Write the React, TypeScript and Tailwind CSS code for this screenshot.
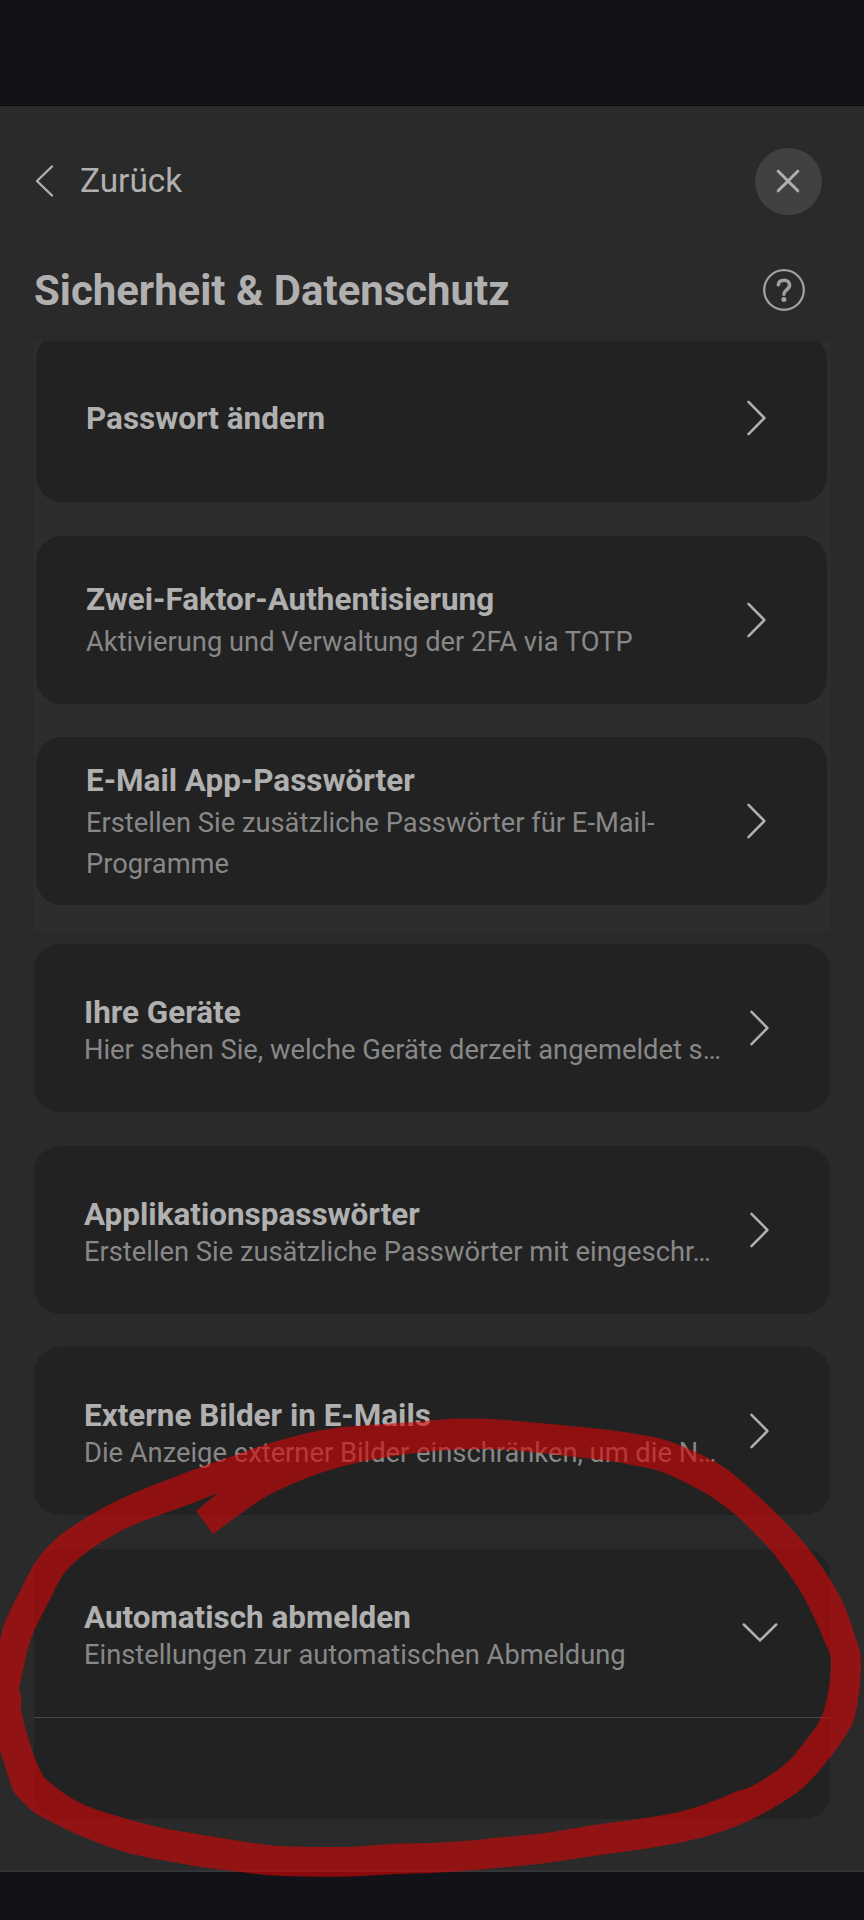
type Item = {
  title: string;
  text?: string;
};

type Point = [number, number];

const accountItems: Item[] = [
  { title: "Passwort ändern" },
  {
    title: "Zwei-Faktor-Authentisierung",
    text: "Aktivierung und Verwaltung der 2FA via TOTP",
  },
  {
    title: "E-Mail App-Passwörter",
    text: "Erstellen Sie zusätzliche Passwörter für E-Mail-Programme",
  },
];

const settingItems: Item[] = [
  {
    title: "Ihre Geräte",
    text: "Hier sehen Sie, welche Geräte derzeit angemeldet s…",
  },
  {
    title: "Applikationspasswörter",
    text: "Erstellen Sie zusätzliche Passwörter mit eingeschr…",
  },
  {
    title: "Externe Bilder in E-Mails",
    text: "Die Anzeige externer Bilder einschränken, um die N…",
  },
];

const markerOuter: Point[] = [
  [4, 1623], [17, 1597], [31, 1569], [39, 1557], [50, 1544], [60, 1535], [73, 1526], [100, 1509], [133, 1493],
  [167, 1480], [200, 1467], [233, 1456], [260, 1446], [287, 1438], [320, 1430], [350, 1426], [400, 1423], [432, 1420.5],
  [452, 1418.5], [485, 1418.5], [519, 1421], [565, 1425.5], [599, 1428.5], [632, 1433], [665, 1439], [692, 1450],
  [722, 1465], [742, 1481], [769, 1506], [789, 1526], [809, 1548], [829, 1577], [845, 1605], [855, 1636],
  [861, 1653], [861, 1680], [855, 1720], [846, 1735], [832, 1756], [805, 1787], [785, 1801], [752, 1820],
  [719, 1833], [685, 1842], [645, 1849], [592, 1856], [549, 1863], [509, 1867], [465, 1871], [432, 1873],
  [393, 1874], [350, 1877], [300, 1876.5], [267, 1875.5], [240, 1872], [200, 1867], [167, 1861], [133, 1855],
  [100, 1844], [67, 1830], [50, 1821], [33, 1812.5], [23, 1802], [13, 1792], [9, 1778], [2.5, 1758],
  [0, 1750], [-3, 1740], [-3, 1655], [0, 1640],
];

const markerInner: Point[] = [
  [218, 1493], [218, 1493], [196, 1511], [196, 1511], [213, 1534], [213, 1534], [255, 1503], [278, 1490], [318, 1473],
  [360, 1461.5], [400, 1455], [432, 1451], [465, 1449], [500, 1449], [532, 1452], [575, 1457], [612, 1461],
  [632, 1465], [659, 1470], [685, 1482], [709, 1495], [719, 1502], [734, 1513], [752, 1530], [769, 1548],
  [785, 1568], [802, 1593], [813, 1615], [820, 1630], [825, 1643], [831, 1655], [831, 1670], [829, 1690],
  [822, 1720], [802, 1745], [789, 1762], [772, 1774], [752, 1787], [737, 1791], [719, 1799], [692, 1809],
  [665, 1815], [632, 1820], [592, 1825], [549, 1833], [505, 1837], [465, 1841], [432, 1843], [387, 1844],
  [353, 1847], [313, 1847], [273, 1846], [233, 1840], [197, 1834], [160, 1828], [127, 1819], [90, 1808],
  [67, 1796], [53, 1785], [43, 1777], [35, 1759], [31, 1747], [25, 1728], [20, 1706], [22, 1698],
  [18.5, 1690], [21, 1680], [25, 1660], [30, 1640], [38, 1622], [50, 1600], [60, 1578], [72, 1564],
  [93, 1547], [127, 1527], [160, 1515], [193, 1503],
];

// closed curve through the midpoints of the given points
function smoothPath(points: Point[]) {
  const mid = (a: Point, b: Point) => `${(a[0] + b[0]) / 2} ${(a[1] + b[1]) / 2}`;
  const last = points[points.length - 1];
  const curves = points.map((p, i) => `Q${p[0]} ${p[1]} ${mid(p, points[(i + 1) % points.length])}`);
  return `M${mid(last, points[0])}${curves.join("")}Z`;
}

function ChevronRight() {
  return (
    <svg className="h-9 w-5 shrink-0" viewBox="0 0 20 36" fill="none" stroke="#b0b0b0" strokeWidth="2.5" strokeLinecap="round" strokeLinejoin="round">
      <path d="M1.5 1.8L17.4 18L1.5 34.2" />
    </svg>
  );
}

function ChevronDown() {
  return (
    <svg className="h-5 w-9 shrink-0" viewBox="0 0 36 20" fill="none" stroke="#b0b0b0" strokeWidth="2.5" strokeLinecap="round" strokeLinejoin="round">
      <path d="M1.8 1.5L18 17.4L34.2 1.5" />
    </svg>
  );
}

function AccountCard({ title, text }: Item) {
  return (
    <button className="flex h-[168px] w-full items-center justify-between rounded-[26px] bg-[#222222] pr-[60.5px] pl-[50px] text-left">
      <span className="block w-[600px]">
        <span className="block text-[31.45px] leading-[45px] font-bold text-[#b0b0b0]">{title}</span>
        {text && <span className="block text-[27.3px] leading-[40.5px] text-[#888888]">{text}</span>}
      </span>
      <ChevronRight />
    </button>
  );
}

function SettingText({ title, text }: Item) {
  return (
    <span className="block pt-[5px] whitespace-nowrap">
      <span className="block text-[31.45px] leading-[39px] font-bold text-[#b0b0b0]">{title}</span>
      <span className="block text-[27.3px] leading-9 text-[#888888]">{text}</span>
    </span>
  );
}

export default function App() {
  return (
    <div className="relative flex h-[1920px] w-[864px] flex-col overflow-hidden bg-[#111318] font-['Roboto',sans-serif]">
      <div className="h-[106px] shrink-0 border-b border-[#0a0a0a]" />

      <main className="h-[1766px] shrink-0 border-b-2 border-[#343538] bg-[#2a2a2a] px-[34px]">
        <header className="flex h-[150px] items-center justify-between pr-2">
          <button className="flex items-center text-[33.4px] leading-10 text-[#b0b0b0]">
            <svg className="mr-[26px] h-8 w-5" viewBox="0 0 20 32" fill="none" stroke="#b0b0b0" strokeWidth="2.4" strokeLinecap="round" strokeLinejoin="round">
              <path d="M18 1.5L3 16L18 30.5" />
            </svg>
            Zurück
          </button>
          <button className="flex size-[67px] items-center justify-center rounded-full bg-[#414141]">
            <svg className="mr-px size-6" viewBox="0 0 24 24" fill="none" stroke="#b0b0b0" strokeWidth="3" strokeLinecap="round">
              <path d="M2.2 2.2L21.8 21.8M21.8 2.2L2.2 21.8" />
            </svg>
          </button>
        </header>

        <div className="flex h-[84.5px] items-start justify-between pt-2.5 pr-[25px]">
          <h1 className="text-[41.9px] leading-[50px] font-bold text-[#b0b0b0]">Sicherheit &amp; Datenschutz</h1>
          <svg className="mt-[3px] size-[42px]" viewBox="0 0 42 42" fill="none" stroke="#a0a0a0" strokeLinecap="round">
            <circle cx="21" cy="21" r="19.8" strokeWidth="2.3" />
            <path d="M15.3 15.8C15.6 12.8 18 11.2 21.1 11.2C24.4 11.2 26.6 13.1 26.6 15.9C26.6 18.2 25.3 19.4 23.6 20.8C21.7 22.3 20.9 23.2 20.9 25.2" strokeWidth="3.5" />
            <circle cx="20.9" cy="30.5" r="2.5" fill="#a0a0a0" stroke="none" />
          </svg>
        </div>

        <section className="h-[590px] overflow-hidden bg-[#2d2d2d] pr-[3px] pl-0.5">
          <div className="-mt-[6.5px] space-y-[33.5px]">
            {accountItems.map((item) => (
              <AccountCard key={item.title} {...item} />
            ))}
          </div>
        </section>

        <section className="mt-[13.5px] space-y-[33.5px]">
          {settingItems.map((item) => (
            <button key={item.title} className="flex h-[168px] w-full items-center justify-between rounded-[26px] bg-[#222222] pr-[60px] pl-[50px] text-left">
              <SettingText {...item} />
              <ChevronRight />
            </button>
          ))}
          <div className="h-[270.5px] rounded-[26px] bg-[#222222]">
            <button className="flex h-[169px] w-full items-center justify-between border-b border-[#484848] pr-[52px] pl-[50px] text-left">
              <SettingText title="Automatisch abmelden" text="Einstellungen zur automatischen Abmeldung" />
              <ChevronDown />
            </button>
          </div>
        </section>
      </main>

      {/* hand-drawn marker around the auto logout entry */}
      <svg className="pointer-events-none absolute inset-0" width="864" height="1920" viewBox="0 0 864 1920">
        <path d={smoothPath(markerOuter) + smoothPath(markerInner)} fill="#d90505" fillOpacity="0.6" fillRule="evenodd" />
      </svg>
    </div>
  );
}
